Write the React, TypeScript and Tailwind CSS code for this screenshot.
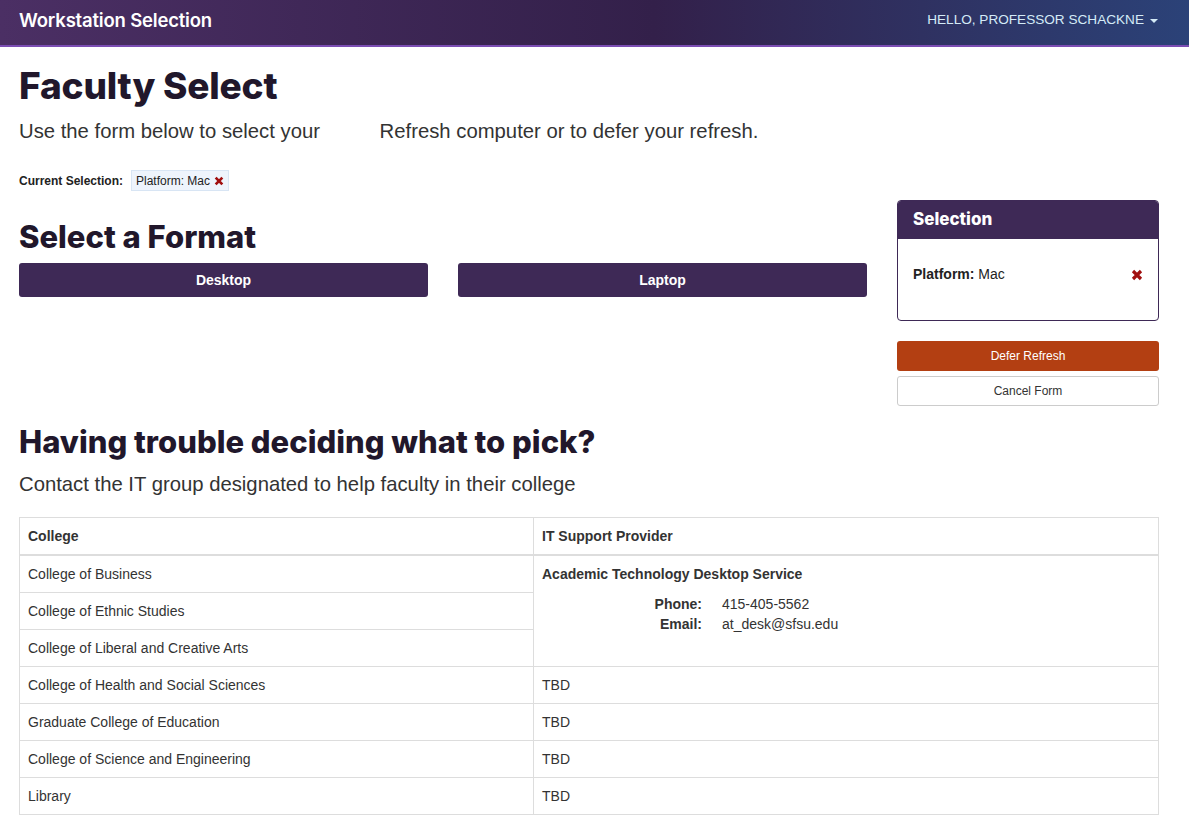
import React from 'react';

// Крестик удаления выбора
const RemoveIcon: React.FC<{ size?: number }> = ({ size = 11 }) => (
    <svg width={size} height={size} viewBox="0 0 12 12" className="inline-block">
        <path d="M2 2 L10 10 M10 2 L2 10" stroke="#a10f0f" strokeWidth="3.2" strokeLinecap="butt" />
    </svg>
);

const colleges = [
    'College of Health and Social Sciences',
    'Graduate College of Education',
    'College of Science and Engineering',
    'Library',
];

const heading = "font-['Inter',sans-serif] font-extrabold text-[#21172b]";

export default function App() {
    return (
        <div className="min-h-screen bg-white font-['Liberation_Sans',Arial,sans-serif] text-[#333]">
            {/* Навбар */}
            <nav className="flex h-[47px] items-center justify-between border-b-2 border-[#7b4db3] bg-[linear-gradient(90deg,#4b2f64_0%,#33204a_55%,#2b4278_100%)] pb-[4px] pl-[19px] pr-[31px]">
                <span className="font-['Inter',sans-serif] text-[18.5px] font-semibold tracking-[-0.01em] text-white">
                    Workstation Selection
                </span>
                <span className="flex items-center gap-[6px] text-[13.6px] text-[#d4ebf7]">
                    HELLO, PROFESSOR SCHACKNE
                    <span className="mt-[2px] h-0 w-0 border-x-[4px] border-t-[4px] border-x-transparent border-t-[#d4ebf7]" />
                </span>
            </nav>

            <main className="pl-[19px] pr-[30px]">
                <h1 className={`${heading} mt-[18px] text-[37px] leading-[42px] tracking-[-0.005em]`}>Faculty Select</h1>
                <p className="mt-[11px] text-[20.3px] font-light leading-[26px] text-[#333]">
                    Use the form below to select your <span className="inline-block w-[54px]" />Refresh computer or to defer your refresh.
                </p>

                {/* Текущий выбор */}
                <div className="mt-[26px] flex items-center gap-[8px]">
                    <span className="text-[12px] font-bold text-[#222]">Current Selection:</span>
                    <span className="flex h-[21px] items-center gap-[4px] border border-[#d8e5f4] bg-[#eef4fc] px-[4px] text-[12px] text-[#222]">
                        Platform: Mac <RemoveIcon size={10} />
                    </span>
                </div>

                <div className="mt-[9px] flex gap-[30px]">
                    {/* Формат */}
                    <section className="flex-1 pt-[20px]">
                        <h2 className={`${heading} text-[31px] leading-[34px]`}>Select a Format</h2>
                        <div className="mt-[9px] grid grid-cols-2 gap-[30px]">
                            <button className="h-[34px] rounded-[3px] bg-[#3e2956] text-[14px] font-bold text-white">Desktop</button>
                            <button className="h-[34px] rounded-[3px] bg-[#3e2956] text-[14px] font-bold text-white">Laptop</button>
                        </div>
                    </section>

                    {/* Панель выбора */}
                    <aside className="w-[262px]">
                        <div className="overflow-hidden rounded-[4px] border border-[#3e2956]">
                            <div className="flex h-[38px] items-center bg-[#3e2956] px-[15px] font-['Inter',sans-serif] text-[17px] font-extrabold text-white">
                                Selection
                            </div>
                            <div className="flex h-[81px] items-center justify-between px-[15px] pb-[10px] text-[14px] text-[#222]">
                                <span><b>Platform:</b> Mac</span>
                                <RemoveIcon size={12} />
                            </div>
                        </div>
                        <button className="mt-[20px] block h-[30px] w-full rounded-[3px] bg-[#b33f12] text-[12px] text-white">Defer Refresh</button>
                        <button className="mt-[5px] block h-[30px] w-full rounded-[3px] border border-[#ccc] bg-white text-[12px] text-[#333]">Cancel Form</button>
                    </aside>
                </div>

                {/* Помощь */}
                <h2 className={`${heading} mt-[19px] text-[31px] leading-[34px]`}>Having trouble deciding what to pick?</h2>
                <p className="mt-[12px] text-[20.3px] font-light leading-[26px]">Contact the IT group designated to help faculty in their college</p>

                <table className="mt-[20px] w-full border-collapse border border-[#ddd] text-[14px] leading-[20px] text-[#333]">
                    <thead>
                        <tr>
                            <th className="w-[514px] border border-b-2 border-[#ddd] p-[8px] text-left font-bold">College</th>
                            <th className="border border-b-2 border-[#ddd] p-[8px] text-left font-bold">IT Support Provider</th>
                        </tr>
                    </thead>
                    <tbody>
                        <tr>
                            <td className="border border-[#ddd] p-[8px]">College of Business</td>
                            <td rowSpan={3} className="border border-[#ddd] p-[8px] align-top">
                                <b>Academic Technology Desktop Service</b>
                                <dl className="mt-[10px] grid grid-cols-[160px_1fr] gap-x-[20px]">
                                    <dt className="text-right font-bold">Phone:</dt>
                                    <dd>415-405-5562</dd>
                                    <dt className="text-right font-bold">Email:</dt>
                                    <dd>at_desk@sfsu.edu</dd>
                                </dl>
                            </td>
                        </tr>
                        <tr>
                            <td className="border border-[#ddd] p-[8px]">College of Ethnic Studies</td>
                        </tr>
                        <tr>
                            <td className="border border-[#ddd] p-[8px]">College of Liberal and Creative Arts</td>
                        </tr>
                        {colleges.map((c) => (
                            <tr key={c}>
                                <td className="border border-[#ddd] p-[8px]">{c}</td>
                                <td className="border border-[#ddd] p-[8px]">TBD</td>
                            </tr>
                        ))}
                    </tbody>
                </table>
            </main>
        </div>
    );
}
